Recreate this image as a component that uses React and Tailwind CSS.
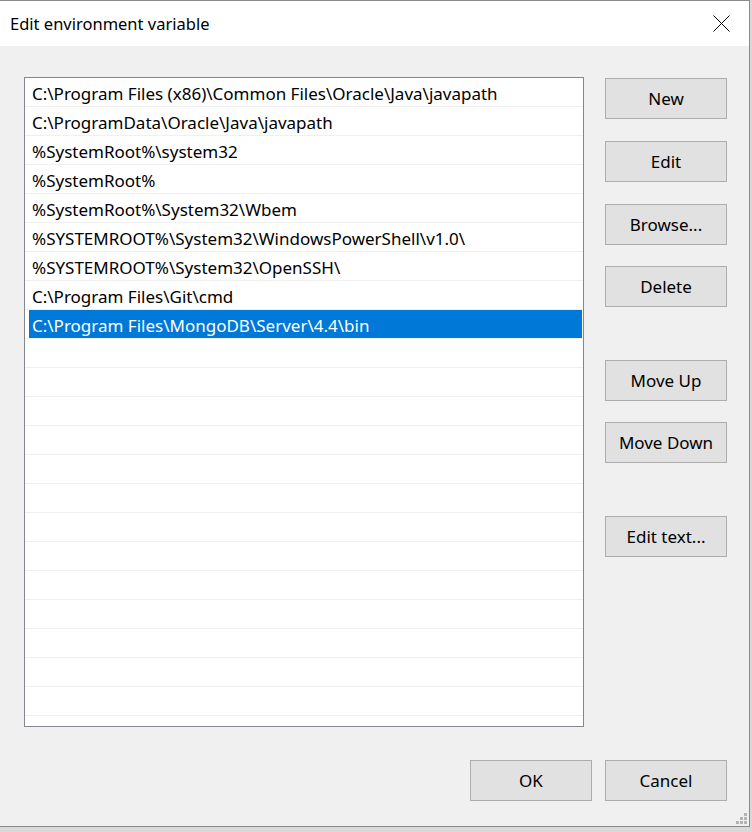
import React from "react";

const paths = [
  "C:\\Program Files (x86)\\Common Files\\Oracle\\Java\\javapath",
  "C:\\ProgramData\\Oracle\\Java\\javapath",
  "%SystemRoot%\\system32",
  "%SystemRoot%",
  "%SystemRoot%\\System32\\Wbem",
  "%SYSTEMROOT%\\System32\\WindowsPowerShell\\v1.0\\",
  "%SYSTEMROOT%\\System32\\OpenSSH\\",
  "C:\\Program Files\\Git\\cmd",
  "C:\\Program Files\\MongoDB\\Server\\4.4\\bin",
];

const SELECTED = 8;
const TOTAL_ROWS = 23;

// side buttons with their top margin
const sideButtons = [
  { label: "New", mt: "mt-[1px]" },
  { label: "Edit", mt: "mt-[22px]" },
  { label: "Browse...", mt: "mt-[22px]" },
  { label: "Delete", mt: "mt-[21px]" },
  { label: "Move Up", mt: "mt-[53px]" },
  { label: "Move Down", mt: "mt-[21px]" },
  { label: "Edit text...", mt: "mt-[53px]" },
];

function WinButton({ label, className = "" }) {
  return (
    <button
      className={`w-[122px] h-[41px] bg-[#e1e1e1] border border-[#adadad] text-[17px] text-black flex items-center justify-center pt-[1px] ${className}`}
    >
      {label}
    </button>
  );
}

export default function App() {
  const rows = Array.from({ length: TOTAL_ROWS }, (_, i) => paths[i] || "");

  return (
    <div
      className="w-[752px] h-[832px] bg-[#d9d9d9] overflow-hidden"
      style={{ fontFamily: '"Noto Sans", "Open Sans", sans-serif' }}
    >
      <div className="relative w-[750px] h-[827px] bg-[#f0f0f0] border-t border-r border-b border-[#8a8a8a] flex flex-col">
        {/* Title bar */}
        <div className="h-[45px] bg-white flex items-center justify-between pl-[10px] pr-[19px] shrink-0">
          <span className="text-[16.5px] text-black pt-[1px]">
            Edit environment variable
          </span>
          <svg width="17" height="17" viewBox="0 0 17 17">
            <line x1="0.5" y1="0.5" x2="16.5" y2="16.5" stroke="#000" strokeWidth="1" />
            <line x1="16.5" y1="0.5" x2="0.5" y2="16.5" stroke="#000" strokeWidth="1" />
          </svg>
        </div>

        {/* Body */}
        <div className="flex pl-[24px] pt-[31px]">
          <div className="w-[560px] h-[650px] bg-white border border-[#828790] overflow-hidden">
            {rows.map((text, i) => (
              <div
                key={i}
                className="h-[29px] border-b border-[#f0f0f0] flex items-stretch"
              >
                <div
                  className={`flex-1 ml-[4px] mr-[1px] pl-[3px] pt-[3px] flex items-center text-[17px] whitespace-nowrap ${
                    i === SELECTED ? "bg-[#0078d7] text-white" : "text-black"
                  }`}
                >
                  {text}
                </div>
              </div>
            ))}
          </div>

          <div className="ml-[21px] flex flex-col">
            {sideButtons.map(({ label, mt }) => (
              <WinButton key={label} label={label} className={mt} />
            ))}
          </div>
        </div>

        {/* Footer */}
        <div className="flex justify-end gap-[13px] pr-[22px] mt-[33px]">
          <WinButton label="OK" />
          <WinButton label="Cancel" />
        </div>

        {/* Resize grip */}
        <svg
          className="absolute right-[2px] bottom-[2px]"
          width="11"
          height="11"
          viewBox="0 0 11 11"
        >
          <rect x="8" y="0" width="3" height="3" fill="#b4b4b4" />
          <rect x="4" y="4" width="3" height="3" fill="#b4b4b4" />
          <rect x="8" y="4" width="3" height="3" fill="#b4b4b4" />
          <rect x="0" y="8" width="3" height="3" fill="#b4b4b4" />
          <rect x="4" y="8" width="3" height="3" fill="#b4b4b4" />
          <rect x="8" y="8" width="3" height="3" fill="#b4b4b4" />
        </svg>
      </div>
    </div>
  );
}
